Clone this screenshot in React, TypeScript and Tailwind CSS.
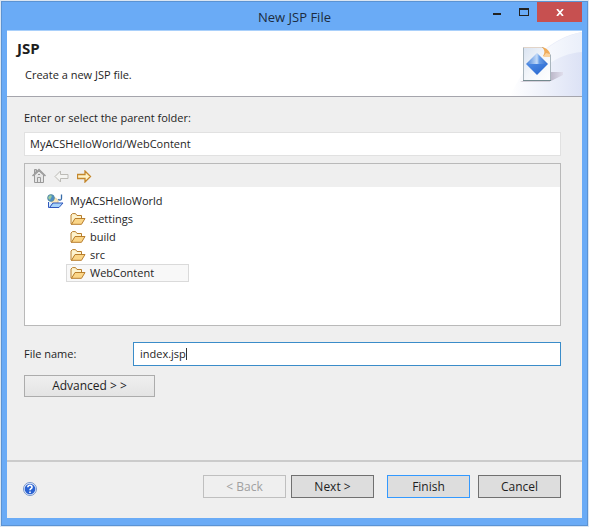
import { useState } from "react";

function PageIcon() {
  return (
    <svg width="46" height="40" viewBox="0 0 46 40" aria-hidden="true">
      <defs>
        <linearGradient id="paper" x1="0" y1="0" x2="1" y2="1">
          <stop offset="0" stopColor="#d9e3f1" />
          <stop offset="0.5" stopColor="#f3f6fa" />
          <stop offset="1" stopColor="#ffffff" />
        </linearGradient>
        <linearGradient id="gemTop" x1="0" y1="0" x2="1" y2="0">
          <stop offset="0" stopColor="#3f7dd8" />
          <stop offset="0.5" stopColor="#c4dbf8" />
          <stop offset="0.6" stopColor="#6a9fe8" />
          <stop offset="1" stopColor="#2f6bce" />
        </linearGradient>
        <linearGradient id="gemBottom" x1="0" y1="0" x2="1" y2="1">
          <stop offset="0" stopColor="#4f8ce6" />
          <stop offset="1" stopColor="#2463cc" />
        </linearGradient>
        <linearGradient id="shade" x1="0" y1="0" x2="1" y2="0">
          <stop offset="0" stopColor="#bdb9ca" />
          <stop offset="1" stopColor="#e0deec" />
        </linearGradient>
      </defs>
      <path d="M31 27H43V30L31 36Z" fill="url(#shade)" />
      <path d="M0 36H30V37H2Z" fill="#d5d0da" />
      <path d="M3.500 2.500H23L30.500 10V35.500H3.500Z" fill="url(#paper)" stroke="#a9b5bd" />
      <path d="M3.500 2.500H22" stroke="#e2d4c8" />
      <path d="M3 35.500H31" stroke="#74898e" />
      <path d="M22 2C25 5 25 8 23 11L30 11C31 7 27 3 22 2Z" fill="#f0ab58" />
      <path d="M23 12L26 8L30 9V12Z" fill="#fad29d" />
      <path d="M17 8L28 19H6Z" fill="url(#gemTop)" />
      <path d="M6 19H28L17 30Z" fill="url(#gemBottom)" />
    </svg>
  );
}

function HeaderArt() {
  return (
    <svg className="h-full w-18" viewBox="0 0 72 65" preserveAspectRatio="none" aria-hidden="true">
      <defs>
        <linearGradient id="sky" x1="0" y1="0" x2="1" y2="0">
          <stop offset="0" stopColor="#ffffff" />
          <stop offset="1" stopColor="#dce2f5" />
        </linearGradient>
        <linearGradient id="wave" x1="0" y1="0" x2="1" y2="0">
          <stop offset="0" stopColor="#fbfcfe" />
          <stop offset="1" stopColor="#eaeffa" />
        </linearGradient>
      </defs>
      <path d="M0 65C16 30 42 6 72 1V65Z" fill="url(#sky)" />
      <path d="M32 22C44 11 58 4 72 1V21C58 22 48 27 40 32L26 30Z" fill="url(#wave)" />
    </svg>
  );
}

function HomeIcon() {
  return (
    <svg width="14" height="16" viewBox="0 0 14 16" fill="none" stroke="#9a9a9a" aria-hidden="true">
      <path d="M2.500 7V14.500H11.500V7L7 3Z" fill="#e6e6e6" />
      <path d="M2.500 6V1.500H4.500V4" fill="#c4c4c4" />
      <path d="M0.500 8L7 1.500L13.500 8" strokeWidth="1.500" />
      <path d="M5.500 14V9.500H8.500V14M6 6.500H8" />
    </svg>
  );
}

function ArrowIcon({ forward }: { forward?: boolean }) {
  return forward ? (
    <svg width="15" height="13" viewBox="0 0 15 13" aria-hidden="true">
      <path d="M0.500 4.500H8V1L13.500 6.500L8 12V8.500H0.500Z" fill="#fff3c8" stroke="#c4872c" strokeWidth="1.300" />
    </svg>
  ) : (
    <svg width="15" height="13" viewBox="0 0 15 13" aria-hidden="true">
      <path d="M14 4.500H6.500V1L1 6.500L6.500 12V8.500H14Z" fill="#f4f4f2" stroke="#bcbbb6" />
    </svg>
  );
}

function FolderIcon() {
  return (
    <svg width="16" height="12" viewBox="0 0 16 12" aria-hidden="true">
      <path d="M1 11V2L2.500 0.600H5.500L7 2.500H11.500V5.500H5.500L2 11.400Z" fill="#fdf3ce" stroke="#b87e2d" />
      <path d="M1.500 11.300L5 5.500H15L11.500 11.300Z" fill="#fbd688" stroke="#b87e2d" />
    </svg>
  );
}

function ProjectIcon() {
  return (
    <svg width="17" height="15" viewBox="0 0 17 15" aria-hidden="true">
      <path d="M5 10V6L8 3.500L11 6.500V9Z" fill="#fbe9bd" stroke="#dfc48f" />
      <circle cx="4" cy="4" r="3.400" fill="#4d8dc6" stroke="#5b8f9c" strokeWidth="0.800" />
      <path d="M2 2C4 0 6 2 4 4L3 6L1 4Z" fill="#9bcb9c" />
      <path d="M14.500 0.500V4.500C14.500 6.500 12 6.800 11.500 5" fill="none" stroke="#376ba8" strokeWidth="1.300" />
      <path d="M1.500 8V13.500H3L6 9" fill="#d8ecff" stroke="#3158bd" />
      <path d="M2.500 13.500L6 9H16L12 13.500Z" fill="#a6d2fa" stroke="#3158bd" />
    </svg>
  );
}

function HelpIcon() {
  return (
    <svg width="14" height="14" viewBox="0 0 14 14" aria-hidden="true">
      <circle cx="7" cy="7" r="6.500" fill="#e8effc" stroke="#7694ca" />
      <circle cx="7" cy="7" r="5.300" fill="#2a62d2" />
      <path d="M4.800 5.300C5 2.500 9.400 2.800 9 5.300C8.800 6.700 7 6.700 7 8.300M7 9.500V11" fill="none" stroke="#fff" strokeWidth="1.600" />
    </svg>
  );
}

const folders = [".settings", "build", "src", "WebContent"];

export default function App() {
  const [parent, setParent] = useState("MyACSHelloWorld/WebContent");
  const [fileName, setFileName] = useState("index.jsp");
  const [selected, setSelected] = useState("WebContent");

  return (
    <div className="border border-[#dbe6f2] font-['Open_Sans','Noto_Sans',sans-serif] text-[11px] leading-4 text-[#1e1e1e]">
      <div className="border border-[#5b93d3] bg-[#6aabf6] px-[5px] pb-[7px]">
        <header className="grid h-7 grid-cols-[1fr_auto_1fr] items-start">
          <h1 className="col-start-2 pt-[5px] text-[13px] leading-5 font-normal text-[#1c2b40]">New JSP File</h1>
          <div className="flex h-5 justify-end">
            <button aria-label="Minimize" className="flex w-7 items-center justify-center pt-1">
              <svg width="8" height="2"><path d="M0 0H8V2H0Z" fill="#222" /></svg>
            </button>
            <button aria-label="Maximize" className="flex w-[26px] items-center justify-center">
              <svg width="10" height="8"><path d="M0 0H10V8H0ZM1 2V7H9V2Z" fill="#222" fillRule="evenodd" /></svg>
            </button>
            <button aria-label="Close" className="flex w-[45px] items-center justify-center bg-[#c75050]">
              <svg width="8" height="7" viewBox="0 0 8 7"><path d="M1 0L7 7M7 0L1 7" stroke="#fff" strokeWidth="1.700" /></svg>
            </button>
          </div>
        </header>

        <div className="border-t border-[#a9d0fb] bg-[#efefef]">
          <section className="grid h-[66px] grid-cols-[1fr_auto] border-b border-[#a5a5ac] bg-white">
            <div className="pt-[7px] pl-2.5">
              <h2 className="text-[15px] leading-5 font-bold">JSP</h2>
              <p className="pt-[9px] pl-2">Create a new JSP file.</p>
            </div>
            <div className="grid h-[65px] grid-cols-[72px]">
              <div className="col-start-1 row-start-1 h-[65px]"><HeaderArt /></div>
              <div className="col-start-1 row-start-1 self-start pt-3.5 pl-2.5"><PageIcon /></div>
            </div>
          </section>

          <main className="pr-[21px] pb-[63px] pl-[17px]">
            <label htmlFor="parent" className="block pt-[13px] pb-1.5">Enter or select the parent folder:</label>
            <input
              id="parent"
              value={parent}
              onChange={(e) => setParent(e.target.value)}
              className="block h-6 w-full border border-[#e1e1e1] bg-white px-[5px] pb-px outline-none"
            />

            <div className="mt-[7px] h-[163px] border border-[#b9b9b9] bg-white">
              <div className="flex h-[23px] items-center gap-2 bg-[#efefef] pt-px pl-[7px]">
                <button aria-label="Home"><HomeIcon /></button>
                <button aria-label="Back"><ArrowIcon /></button>
                <button aria-label="Forward"><ArrowIcon forward /></button>
              </div>
              <ul className="pt-[5px] pl-[22px]">
                <li>
                  <div className="flex h-[18px] items-center gap-1.5"><ProjectIcon />MyACSHelloWorld</div>
                  <ul className="pl-[19px]">
                    {folders.map((name) => (
                      <li key={name}>
                        <button
                          onClick={() => setSelected(name)}
                          className={
                            "flex h-[18px] w-[123px] items-center gap-1 border pl-[3px] " +
                            (selected === name ? "border-[#dadada] bg-[#f8f8f8]" : "border-transparent")
                          }
                        >
                          <FolderIcon />
                          {name}
                        </button>
                      </li>
                    ))}
                  </ul>
                </li>
              </ul>
            </div>

            <div className="flex items-center pt-4">
              <label htmlFor="file" className="w-[109px]">File name:</label>
              <div className="flex h-6 flex-1 items-center border border-[#3a8cc9] bg-white pl-1.5">
                <input
                  id="file"
                  value={fileName}
                  onChange={(e) => setFileName(e.target.value)}
                  className="field-sizing-content outline-none"
                />
                <span className="h-3 w-px bg-[#333]" />
                <span className="flex-1" />
              </div>
            </div>

            <button className="mt-[9px] block h-[22px] w-[131px] border border-[#acacac] bg-linear-to-b from-[#efefef] to-[#e4e4e4] text-[12px] leading-4">
              Advanced &gt; &gt;
            </button>
          </main>

          <footer className="flex items-center border-t-2 border-[#cbcbcb] pt-[13px] pr-[21px] pb-5 pl-4 text-[12px] leading-4">
            <button aria-label="Help" className="mr-auto pt-1"><HelpIcon /></button>
            <button disabled className="mr-[5px] h-[23px] w-[83px] border border-[#bfbfbf] text-center text-[#a0a0a0]">&lt; Back</button>
            <button className="mr-[13px] h-[23px] w-[83px] border border-[#707070] bg-[#dddddd] text-center">Next &gt;</button>
            <button className="mr-2 h-[23px] w-[83px] border border-[#3399ff] bg-[#dddddd] text-center">Finish</button>
            <button className="h-[23px] w-[83px] border border-[#707070] bg-[#dddddd] text-center">Cancel</button>
          </footer>
        </div>
      </div>
    </div>
  );
}
